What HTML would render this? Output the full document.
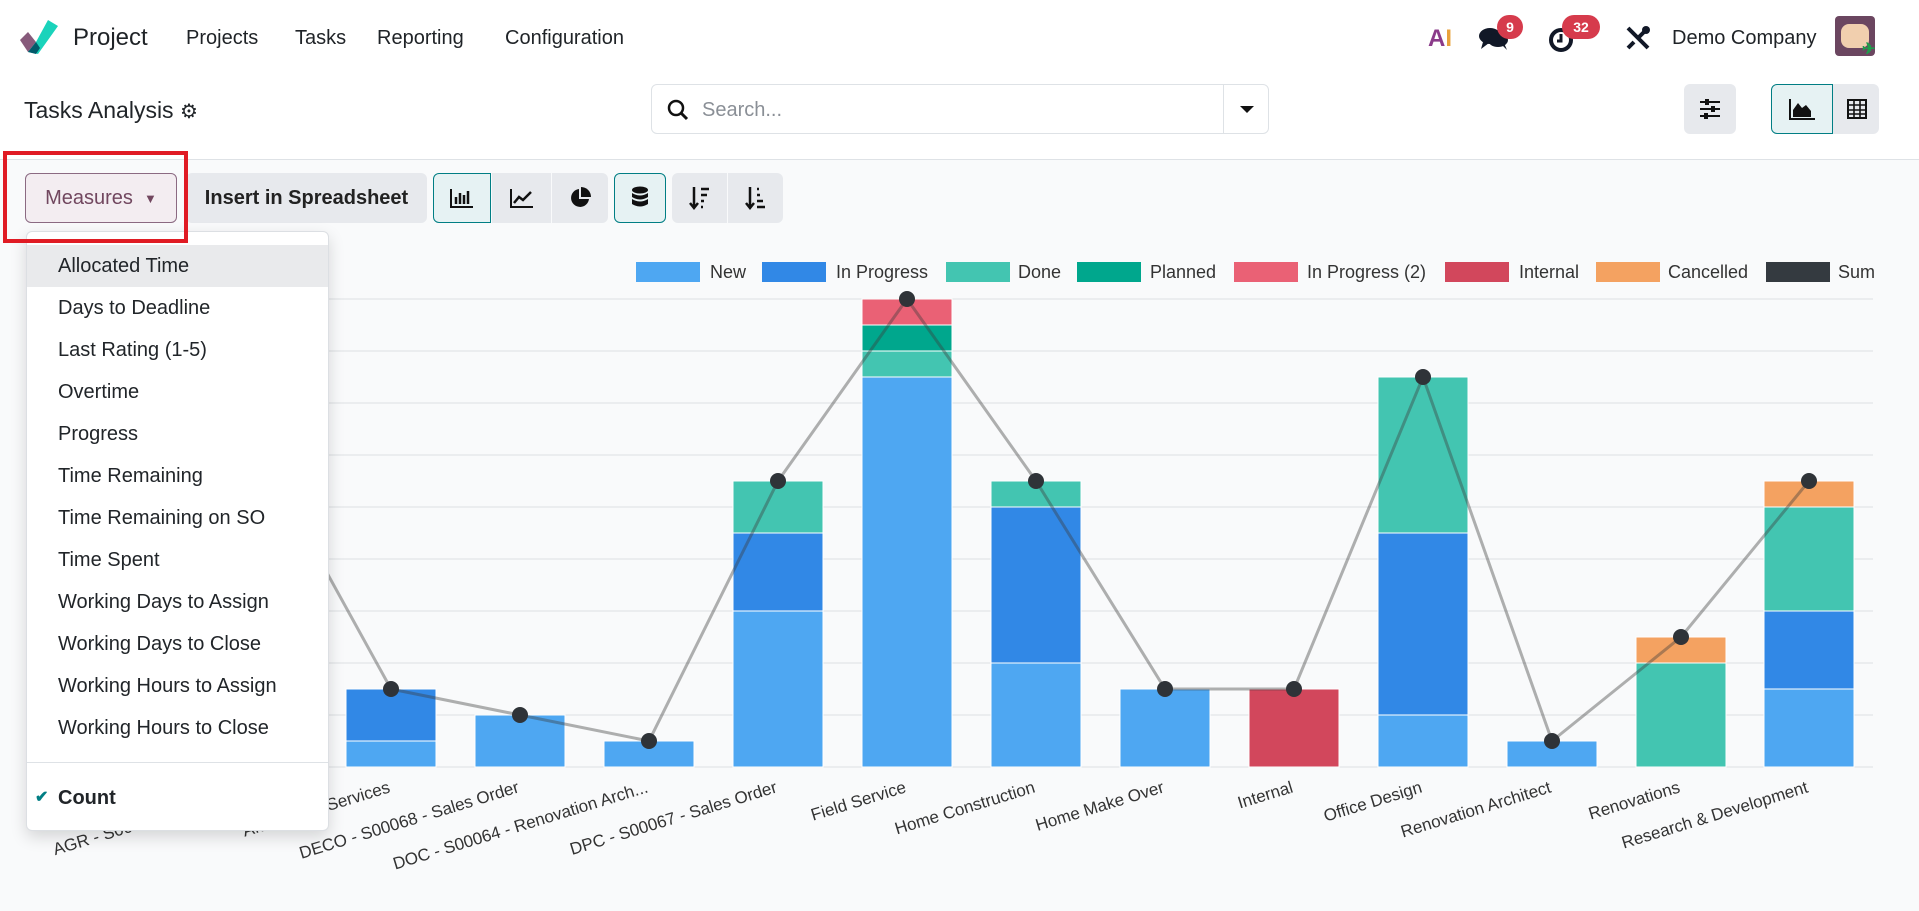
<!DOCTYPE html>
<html><head><meta charset="utf-8"><style>
*{box-sizing:border-box;margin:0;padding:0}
body{width:1919px;height:911px;overflow:hidden;background:#f9fafb;font-family:"Liberation Sans",sans-serif;color:#212529;position:relative}
.a{position:absolute}
.top{left:0;top:0;width:1919px;height:160px;background:#fff;border-bottom:1px solid #dee2e6}
.nav{font-size:20px;top:27px;color:#1f2327}
.btn{position:absolute;background:#e7e9ed;border-radius:6px;top:173px;height:50px;display:flex;align-items:center;justify-content:center}
.dd{left:26px;top:231px;width:303px;height:600px;background:#fff;border:1px solid #dcdfe3;border-radius:6px;box-shadow:0 6px 16px rgba(0,0,0,.15)}
.it{position:absolute;left:0;width:301px;height:42px;padding-left:31px;font-size:20px;line-height:42px;color:#212529}
.badge{background:#d63b4c;color:#fff;font-weight:bold;font-size:14px;border-radius:12px;height:24px;line-height:24px;text-align:center}
</style></head><body>
<div class="a top"></div>
<svg class="a" style="left:18px;top:18px" width="40" height="38" viewBox="0 0 40 38"><path d="M2 22 L10 14 L18 24 L10 34Z" fill="#875a7b"/><path d="M10 34 L18 24 L30 2 L40 8 L20 36Z" fill="#1ad3bb"/><path d="M10 34 L18 24 L22 30 L18 36Z" fill="#015a6a"/></svg>
<div class="a nav" style="left:73px;top:24px;font-size:24px">Project</div>
<div class="a nav" style="left:186px">Projects</div>
<div class="a nav" style="left:295px">Tasks</div>
<div class="a nav" style="left:377px">Reporting</div>
<div class="a nav" style="left:505px">Configuration</div>
<div class="a" style="left:1428px;top:25px;font-weight:bold;font-size:24px;color:#e9a23b"><span style="color:#8b3b8a">A</span>I</div>
<svg class="a" style="left:1478px;top:25px" width="32" height="26" viewBox="0 0 32 26"><ellipse cx="12" cy="11" rx="11" ry="8" fill="#111827"/><path d="M5 17 L3 24 L11 18Z" fill="#111827"/><ellipse cx="20" cy="15" rx="10" ry="7" fill="#111827"/><path d="M24 20 L29 25 L26 18Z" fill="#111827"/></svg>
<div class="a badge" style="left:1497px;top:15px;width:26px">9</div>
<svg class="a" style="left:1548px;top:26px" width="28" height="28" viewBox="0 0 28 28"><circle cx="13" cy="14" r="10" fill="none" stroke="#111827" stroke-width="4"/><path d="M13 8 V15 H9" stroke="#111827" stroke-width="3" fill="none"/></svg>
<div class="a badge" style="left:1562px;top:15px;width:38px">32</div>
<svg class="a" style="left:1625px;top:25px" width="26" height="26" viewBox="0 0 26 26"><path d="M3 3 L23 23 M23 3 L13 13 M3 23 L9 17" stroke="#111827" stroke-width="4" fill="none"/><circle cx="21" cy="5" r="4" fill="#111827"/></svg>
<div class="a nav" style="left:1672px">Demo Company</div>
<div class="a" style="left:1835px;top:16px;width:40px;height:40px;border-radius:4px;background:#6b4660"><div style="margin:8px 6px;width:28px;height:24px;background:#f1cfae;border-radius:8px"></div></div>
<div class="a" style="left:1862px;top:42px;width:16px;height:16px;color:#1e9e4b;font-size:16px;font-weight:bold;line-height:16px">✈</div>

<div class="a" style="left:24px;top:97px;font-size:23px">Tasks Analysis <span style="font-size:20px">⚙</span></div>
<div class="a" style="left:651px;top:84px;width:618px;height:50px;border:1px solid #dee2e6;border-radius:6px;background:#fff"></div>
<svg class="a" style="left:666px;top:98px" width="24" height="24" viewBox="0 0 24 24"><circle cx="10" cy="10" r="7" fill="none" stroke="#111" stroke-width="2.5"/><path d="M15 15 L21 21" stroke="#111" stroke-width="3"/></svg>
<div class="a" style="left:702px;top:99px;font-size:20px;color:#8a8f96">Search...</div>
<div class="a" style="left:1223px;top:85px;width:1px;height:48px;background:#dee2e6"></div>
<div class="a" style="left:1240px;top:106px;border-left:7px solid transparent;border-right:7px solid transparent;border-top:7px solid #111"></div>
<div class="a" style="left:1684px;top:84px;width:52px;height:50px;background:#e7e9ed;border-radius:6px"></div>
<svg class="a" style="left:1698px;top:98px" width="24" height="22" viewBox="0 0 24 22"><path d="M2 4H22M2 11H22M2 18H22" stroke="#111" stroke-width="2"/><rect x="7" y="1" width="4" height="6" fill="#111"/><rect x="13" y="8" width="4" height="6" fill="#111"/><rect x="6" y="15" width="4" height="6" fill="#111"/></svg>
<div class="a" style="left:1771px;top:84px;width:62px;height:50px;background:#e6f2f3;border:1px solid #017e84;border-radius:6px 0 0 6px"></div>
<svg class="a" style="left:1789px;top:98px" width="26" height="22" viewBox="0 0 26 22"><path d="M1 1V21H26" stroke="#111" stroke-width="2" fill="none"/><path d="M4 19 L4 12 L9 5 L13 10 L17 7 L22 13 L22 19Z" fill="#111"/></svg>
<div class="a" style="left:1833px;top:84px;width:46px;height:50px;background:#e7e9ed;border-radius:0 6px 6px 0"></div>
<svg class="a" style="left:1846px;top:98px" width="22" height="22" viewBox="0 0 22 22"><rect x="2" y="2" width="18" height="18" fill="none" stroke="#111" stroke-width="2"/><path d="M2 7H20M2 12H20M2 16H20M8 2V20M14 2V20" stroke="#111" stroke-width="1.6"/></svg>

<div class="btn" style="left:25px;width:152px;background:#f3edf1;border:1px solid #8b6a82;color:#71475f;font-size:20px">Measures&nbsp;&nbsp;<span style="font-size:13px">▼</span></div>
<div class="btn" style="left:186px;width:241px;font-size:20px;font-weight:bold;color:#222">Insert in Spreadsheet</div>
<div class="btn" style="left:433px;width:58px;background:#e6f2f3;border:1px solid #017e84;border-radius:6px 0 0 6px"><svg width="24" height="20"><path d="M1 1V19H23" stroke="#111" stroke-width="2" fill="none"/><path d="M6 16V9M10 16V5M14 16V7M18 16V3" stroke="#111" stroke-width="2.5"/></svg></div>
<div class="btn" style="left:492px;width:59px;border-radius:0"><svg width="24" height="20"><path d="M1 1V19H23" stroke="#111" stroke-width="2" fill="none"/><path d="M4 15L9 9L13 12L21 4" stroke="#111" stroke-width="2.5" fill="none"/></svg></div>
<div class="btn" style="left:552px;width:56px;border-radius:0 6px 6px 0"><svg width="22" height="22"><path d="M10 2A9 9 0 1 0 20 12H10Z" fill="#111"/><path d="M12 0V10H22A10 10 0 0 0 12 0Z" fill="#111"/></svg></div>
<div class="btn" style="left:614px;width:52px;background:#e6f2f3;border:1px solid #017e84"><svg width="18" height="24"><ellipse cx="9" cy="4" rx="8" ry="3.5" fill="#111"/><path d="M1 7Q9 12 17 7V11Q9 16 1 11Z M1 13Q9 18 17 13V18Q9 23 1 18Z" fill="#111"/></svg></div>
<div class="btn" style="left:672px;width:55px;border-radius:6px 0 0 6px"><svg width="22" height="24"><path d="M5 1V21M1 17L5 22L9 17" stroke="#111" stroke-width="2.5" fill="none"/><path d="M12 3H20M12 9H18M12 15H15M12 21H14" stroke="#111" stroke-width="2.5"/></svg></div>
<div class="btn" style="left:728px;width:55px;border-radius:0 6px 6px 0"><svg width="22" height="24"><path d="M5 1V21M1 17L5 22L9 17" stroke="#111" stroke-width="2.5" fill="none"/><path d="M12 3H14M12 9H15M12 15H18M12 21H20" stroke="#111" stroke-width="2.5"/></svg></div>

<svg class="a" style="left:0;top:0" width="1919" height="911" font-family="Liberation Sans, sans-serif">
<g stroke="#e3e5e8" stroke-width="1.2">
<path d="M200 299H1873M200 351H1873M200 403H1873M200 455H1873M200 507H1873M200 559H1873M200 611H1873M200 663H1873M200 715H1873M200 767H1873"/>
</g>
<g font-size="18" fill="#333" dominant-baseline="middle">
<rect x="636" y="262" width="64" height="20" fill="#4ea7f2"/><text x="710" y="273">New</text>
<rect x="762" y="262" width="64" height="20" fill="#3188e6"/><text x="836" y="273">In Progress</text>
<rect x="946" y="262" width="64" height="20" fill="#43c5b1"/><text x="1018" y="273">Done</text>
<rect x="1077" y="262" width="64" height="20" fill="#00a78d"/><text x="1150" y="273">Planned</text>
<rect x="1234" y="262" width="64" height="20" fill="#ea6175"/><text x="1307" y="273">In Progress (2)</text>
<rect x="1445" y="262" width="64" height="20" fill="#d2475c"/><text x="1519" y="273">Internal</text>
<rect x="1596" y="262" width="64" height="20" fill="#f4a261"/><text x="1668" y="273">Cancelled</text>
<rect x="1766" y="262" width="64" height="20" fill="#343a40"/><text x="1838" y="273">Sum</text>
</g>
<g stroke="#fff" stroke-width="1">
<rect x="217" y="663" width="90" height="104" fill="#4ea7f2"/><rect x="217" y="559" width="90" height="104" fill="#3188e6"/><rect x="217" y="455" width="90" height="104" fill="#43c5b1"/>
<rect x="346" y="741" width="90" height="26" fill="#4ea7f2"/><rect x="346" y="689" width="90" height="52" fill="#3188e6"/>
<rect x="475" y="715" width="90" height="52" fill="#4ea7f2"/>
<rect x="604" y="741" width="90" height="26" fill="#4ea7f2"/>
<rect x="733" y="611" width="90" height="156" fill="#4ea7f2"/><rect x="733" y="533" width="90" height="78" fill="#3188e6"/><rect x="733" y="481" width="90" height="52" fill="#43c5b1"/>
<rect x="862" y="377" width="90" height="390" fill="#4ea7f2"/><rect x="862" y="351" width="90" height="26" fill="#43c5b1"/><rect x="862" y="325" width="90" height="26" fill="#00a78d"/><rect x="862" y="299" width="90" height="26" fill="#ea6175"/>
<rect x="991" y="663" width="90" height="104" fill="#4ea7f2"/><rect x="991" y="507" width="90" height="156" fill="#3188e6"/><rect x="991" y="481" width="90" height="26" fill="#43c5b1"/>
<rect x="1120" y="689" width="90" height="78" fill="#4ea7f2"/>
<rect x="1249" y="689" width="90" height="78" fill="#d2475c"/>
<rect x="1378" y="715" width="90" height="52" fill="#4ea7f2"/><rect x="1378" y="533" width="90" height="182" fill="#3188e6"/><rect x="1378" y="377" width="90" height="156" fill="#43c5b1"/>
<rect x="1507" y="741" width="90" height="26" fill="#4ea7f2"/>
<rect x="1636" y="663" width="90" height="104" fill="#43c5b1"/><rect x="1636" y="637" width="90" height="26" fill="#f4a261"/>
<rect x="1764" y="689" width="90" height="78" fill="#4ea7f2"/><rect x="1764" y="611" width="90" height="78" fill="#3188e6"/><rect x="1764" y="507" width="90" height="104" fill="#43c5b1"/><rect x="1764" y="481" width="90" height="26" fill="#f4a261"/>
</g>
<polyline points="262,455 391,689 520,715 649,741 778,481 907,299 1036,481 1165,689 1294,689 1423,377 1552,741 1681,637 1809,481" fill="none" stroke="rgba(60,60,60,.4)" stroke-width="3"/>
<g fill="#2f3338">
<circle cx="262" cy="455" r="8"/><circle cx="391" cy="689" r="8"/><circle cx="520" cy="715" r="8"/><circle cx="649" cy="741" r="8"/><circle cx="778" cy="481" r="8"/><circle cx="907" cy="299" r="8"/><circle cx="1036" cy="481" r="8"/><circle cx="1165" cy="689" r="8"/><circle cx="1294" cy="689" r="8"/><circle cx="1423" cy="377" r="8"/><circle cx="1552" cy="741" r="8"/><circle cx="1681" cy="637" r="8"/><circle cx="1809" cy="481" r="8"/>
</g>
<g font-size="17" fill="#333" text-anchor="end">
<text transform="translate(262,792) rotate(-17)">AGR - S00066 - Sales Order</text>
<text transform="translate(391,792) rotate(-17)">After Sales Services</text>
<text transform="translate(520,792) rotate(-17)">DECO - S00068 - Sales Order</text>
<text transform="translate(649,792) rotate(-17)">DOC - S00064 - Renovation Arch...</text>
<text transform="translate(778,792) rotate(-17)">DPC - S00067 - Sales Order</text>
<text transform="translate(907,792) rotate(-17)">Field Service</text>
<text transform="translate(1036,792) rotate(-17)">Home Construction</text>
<text transform="translate(1165,792) rotate(-17)">Home Make Over</text>
<text transform="translate(1294,792) rotate(-17)">Internal</text>
<text transform="translate(1423,792) rotate(-17)">Office Design</text>
<text transform="translate(1552,792) rotate(-17)">Renovation Architect</text>
<text transform="translate(1681,792) rotate(-17)">Renovations</text>
<text transform="translate(1809,792) rotate(-17)">Research &amp; Development</text>
</g>
</svg>

<div class="a dd">
<div class="it" style="top:13px;background:#e9eaec">Allocated Time</div>
<div class="it" style="top:55px">Days to Deadline</div>
<div class="it" style="top:97px">Last Rating (1-5)</div>
<div class="it" style="top:139px">Overtime</div>
<div class="it" style="top:181px">Progress</div>
<div class="it" style="top:223px">Time Remaining</div>
<div class="it" style="top:265px">Time Remaining on SO</div>
<div class="it" style="top:307px">Time Spent</div>
<div class="it" style="top:349px">Working Days to Assign</div>
<div class="it" style="top:391px">Working Days to Close</div>
<div class="it" style="top:433px">Working Hours to Assign</div>
<div class="it" style="top:475px">Working Hours to Close</div>
<div class="a" style="left:0;top:530px;width:301px;height:1px;background:#dee2e6"></div>
<div class="it" style="top:545px;font-weight:bold"><span style="position:absolute;left:8px;color:#017e84;font-size:16px">✔</span>Count</div>
</div>
<div class="a" style="left:3px;top:151px;width:185px;height:92px;border:4px solid #e01b24"></div>
</body></html>
